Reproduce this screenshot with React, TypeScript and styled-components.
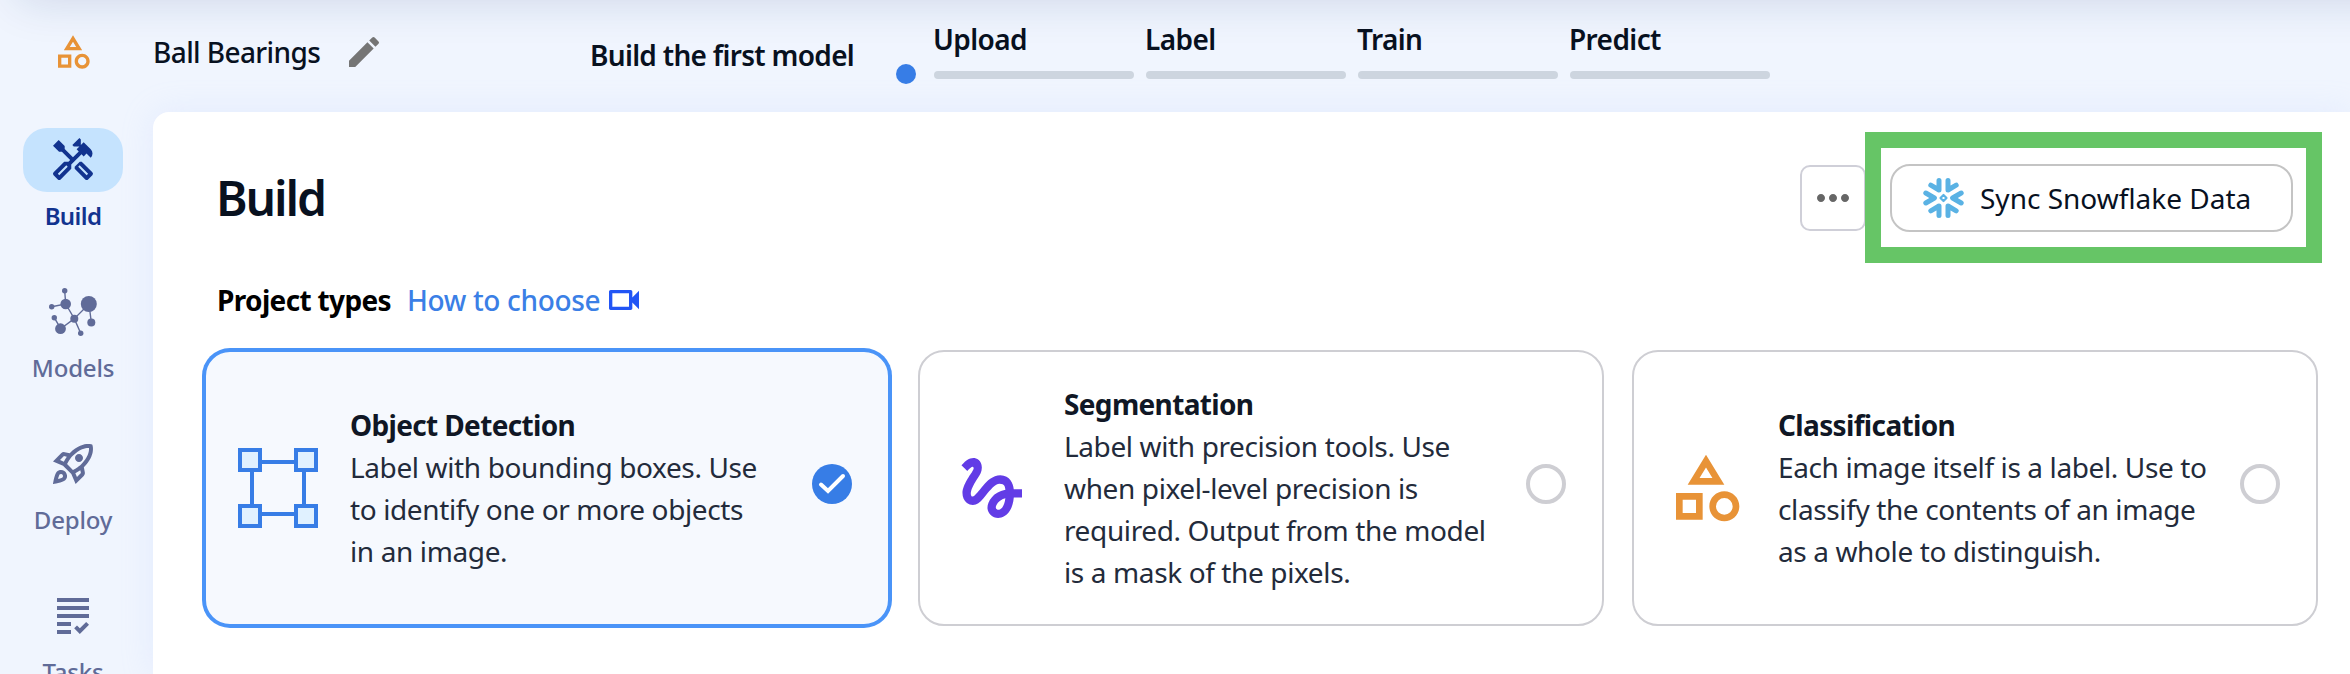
import React from "react";
import styled, { createGlobalStyle } from "styled-components";
import {
  MdEdit,
  MdGesture,
  MdGrading,
  MdMoreHoriz,
  MdOutlineCategory,
  MdOutlineHandyman,
  MdOutlineRocketLaunch,
  MdOutlineVideocam,
} from "react-icons/md";

const GlobalStyle = createGlobalStyle`
  * { box-sizing: border-box; }
  body { margin: 0; overflow: hidden; font-family: "Noto Sans", sans-serif; }
  svg { display: block; flex: none; }
`;

const Page = styled.div`
  position: relative;
  height: 674px;
  overflow: hidden;
  background: #f0f5fe;
  color: #08111f;
  display: grid;
  grid-template-columns: 153px 1fr;
  grid-template-rows: 112px 562px;

  /* Shade cast by the application bar above */
  &::before {
    content: "";
    position: absolute;
    top: -60px;
    left: 18px;
    right: -60px;
    height: 60px;
    box-shadow: 0 0 46px rgba(20, 50, 110, 0.16);
  }
`;

const ProjectMark = styled.div`
  padding: 32px 0 0 53px;
  color: #e89337;
`;

const Header = styled.header`
  display: flex;
  align-items: flex-start;
`;

const ProjectName = styled.div`
  width: 191px;
  padding-top: 35px;
  font-size: 28px;
  font-weight: 500;
  line-height: 34px;
  letter-spacing: -0.6px;
  white-space: nowrap;
`;

const EditButton = styled.div`
  padding-top: 32px;
  width: 246px;
  color: #757575;
`;

const Milestone = styled.div`
  width: 307px;
  padding-top: 38px;
  font-size: 28px;
  font-weight: 600;
  line-height: 34px;
  letter-spacing: -0.7px;
  white-space: nowrap;
`;

const ProgressDot = styled.div`
  width: 20px;
  height: 20px;
  margin: 64px 18px 0 -1px;
  border-radius: 50%;
  background: #377de6;
`;

const Steps = styled.div`
  display: flex;
  gap: 12px;
  padding-top: 22px;
`;

const Step = styled.div`
  width: 200px;
  display: flex;
  flex-direction: column;
  gap: 15px;
  font-size: 28px;
  font-weight: 600;
  line-height: 34px;
  letter-spacing: -0.6px;
`;

const StepLabel = styled.span`
  margin-left: -1px;
`;

const StepBar = styled.div`
  height: 8px;
  border-radius: 4px;
  background: #cdd5df;
`;

const Nav = styled.nav`
  display: flex;
  flex-direction: column;
  gap: 48px;
  padding: 16px 0 0 23px;
`;

const NavItem = styled.div<{ $active?: boolean }>`
  width: 100px;
  display: flex;
  flex-direction: column;
  align-items: center;
  gap: 8px;
  color: ${(p) => (p.$active ? "#12338f" : "#606b98")};
  font-size: 24px;
  font-weight: ${(p) => (p.$active ? 600 : 500)};
  letter-spacing: ${(p) => (p.$active ? "-0.6px" : "-0.2px")};
  line-height: 32px;
`;

const NavPill = styled.div<{ $active?: boolean }>`
  width: 100px;
  height: 64px;
  flex: none;
  display: flex;
  align-items: center;
  justify-content: center;
  border-radius: 24px;
  background: ${(p) => (p.$active ? "#c5e3fe" : "transparent")};
`;

const Panel = styled.main`
  background: #fff;
  border-top-left-radius: 16px;
  box-shadow: 0 0 32px rgba(180, 205, 254, 0.22);
  padding: 20px 28px 0 63px;
`;

const TitleRow = styled.div`
  height: 131px;
  display: flex;
  align-items: center;
`;

const Title = styled.h1`
  flex: 1;
  margin: 0;
  font-size: 48px;
  font-weight: 600;
  line-height: 66px;
  letter-spacing: -2.1px;
`;

const MoreButton = styled.div`
  width: 66px;
  height: 66px;
  margin-right: -1px;
  display: flex;
  align-items: center;
  justify-content: center;
  border: 2px solid #cfcfd8;
  border-radius: 10px;
  color: #666;
`;

const Highlight = styled.div`
  position: relative;
  width: 457px;
  height: 131px;
  border: 16px solid #66c566;
  padding: 16px 13px 0 9px;
  background: #fff;
`;

const SyncButton = styled.div`
  height: 68px;
  display: flex;
  align-items: center;
  gap: 16px;
  padding-left: 31px;
  border: 2px solid #c4c4c4;
  border-radius: 20px;
  font-size: 28px;
  font-weight: 400;
  white-space: nowrap;
`;

const TypesHeader = styled.div`
  display: flex;
  align-items: flex-start;
  margin-top: 17px;
  font-size: 28px;
  line-height: 40px;
  white-space: nowrap;
`;

const TypesTitle = styled.div`
  width: 190px;
  padding-left: 1px;
  color: #000;
  font-weight: 700;
  letter-spacing: -0.65px;
`;

const HelpLink = styled.div`
  width: 198px;
  padding-left: 1px;
  color: #3b7fe6;
  font-weight: 500;
  letter-spacing: -0.35px;
`;

const VideoIcon = styled(MdOutlineVideocam)`
  color: #2255f5;
`;

const Cards = styled.div`
  display: flex;
  gap: 28px;
  margin: 30px 0 0 -12px;
`;

const Card = styled.div<{ $selected?: boolean }>`
  width: 686px;
  flex: none;
  height: 276px;
  display: flex;
  align-items: center;
  padding: 0 36px 0 32px;
  border: 2px solid ${(p) => (p.$selected ? "#4a94f8" : "#ceced3")};
  border-radius: 26px;
  box-shadow: ${(p) => (p.$selected ? "0 0 0 2px #4a94f8" : "none")};
  background: ${(p) => (p.$selected ? "#f6f9fe" : "#fff")};
`;

const CardIcon = styled.div<{ $color: string }>`
  width: 80px;
  height: 80px;
  color: ${(p) => p.$color};
`;

const CardText = styled.div`
  flex: 1;
  margin: 0 0 1px 32px;
  font-size: 28px;
  line-height: 42px;
  letter-spacing: -0.38px;
  white-space: pre;
  color: #232b3b;
`;

const CardTitle = styled.div`
  font-weight: 700;
  letter-spacing: -0.65px;
  color: #101725;
`;

const Radio = styled.div<{ $checked?: boolean }>`
  width: 40px;
  height: 40px;
  margin-bottom: 8px;
  border-radius: 50%;
  border: ${(p) => (p.$checked ? "none" : "4px solid #ceced3")};
  background: ${(p) => (p.$checked ? "#377de6" : "#fff")};
`;

const ModelsIcon = () => (
  <svg width="48" height="48" viewBox="0 0 48 48" fill="currentColor">
    <path
      d="M15.7 2.7 16.7 16 2.7 18.7M16.7 16l8.6 14.7L40 16l2.3 18.3M5.3 29.7l6.4 11 13.6-10 6.4 14.6"
      fill="none"
      stroke="currentColor"
      strokeWidth="1.4"
    />
    <circle cx="15.7" cy="2.7" r="2.7" />
    <circle cx="2.7" cy="18.7" r="2.7" />
    <circle cx="16.7" cy="16" r="5.3" />
    <circle cx="39.8" cy="16" r="8" />
    <circle cx="5.3" cy="29.7" r="2.7" />
    <circle cx="11.5" cy="40.7" r="5.4" />
    <circle cx="25.3" cy="30.7" r="4" />
    <circle cx="42.3" cy="34.5" r="4" />
    <circle cx="31.7" cy="45.3" r="2.7" />
  </svg>
);

const BoxIcon = () => (
  <svg width="80" height="80" viewBox="0 0 80 80">
    <path d="M14 14h52v52H14z" fill="none" stroke="#377de6" strokeWidth="4" />
    {[2, 58].map((x) =>
      [2, 58].map((y) => (
        <rect key={`${x}-${y}`} x={x} y={y} width="20" height="20" fill="#e0f1ff" stroke="#377de6" strokeWidth="4" />
      ))
    )}
  </svg>
);

const SnowflakeIcon = () => (
  <svg width="41" height="40" viewBox="-0.5 0 41 40" fill="none" stroke="#5ab2e4" strokeWidth="5" strokeLinecap="round" strokeLinejoin="round">
    <path d="M15.5 2.5V12L7.3 7.2M24.5 2.5V12l8.2-4.8M15.5 37.5V28l-8.2 4.8M24.5 37.5V28l8.2 4.8M2.3 15l8.6 5-8.6 5M37.7 15l-8.6 5 8.6 5" />
    <path d="m20 17 3 3-3 3-3-3z" strokeWidth="2.2" />
  </svg>
);

const navItems = [
  { label: "Build", icon: <MdOutlineHandyman size={48} />, active: true },
  { label: "Models", icon: <ModelsIcon /> },
  { label: "Deploy", icon: <MdOutlineRocketLaunch size={48} /> },
  { label: "Tasks", icon: <MdGrading size={48} /> },
];

const steps = ["Upload", "Label", "Train", "Predict"];

const projectTypes = [
  {
    title: "Object Detection",
    text: "Label with bounding boxes. Use\nto identify one or more objects\nin an image.",
    icon: <BoxIcon />,
    color: "#377de6",
    selected: true,
  },
  {
    title: "Segmentation",
    text: "Label with precision tools. Use\nwhen pixel-level precision is\nrequired. Output from the model\nis a mask of the pixels.",
    icon: <MdGesture size={80} />,
    color: "#623ce6",
  },
  {
    title: "Classification",
    text: "Each image itself is a label. Use to\nclassify the contents of an image\nas a whole to distinguish.",
    icon: <MdOutlineCategory size={80} />,
    color: "#e89337",
  },
];

export default function App() {
  return (
    <>
      <GlobalStyle />
      <Page>
        <ProjectMark>
          <MdOutlineCategory size={40} />
        </ProjectMark>
        <Header>
          <ProjectName>Ball Bearings</ProjectName>
          <EditButton>
            <MdEdit size={40} />
          </EditButton>
          <Milestone>Build the first model</Milestone>
          <ProgressDot />
          <Steps>
            {steps.map((s) => (
              <Step key={s}>
                <StepLabel>{s}</StepLabel>
                <StepBar />
              </Step>
            ))}
          </Steps>
        </Header>
        <Nav>
          {navItems.map((n) => (
            <NavItem key={n.label} $active={n.active}>
              <NavPill $active={n.active}>{n.icon}</NavPill>
              {n.label}
            </NavItem>
          ))}
        </Nav>
        <Panel>
          <TitleRow>
            <Title>Build</Title>
            <MoreButton>
              <MdMoreHoriz size={48} />
            </MoreButton>
            <Highlight>
              <SyncButton>
                <SnowflakeIcon />
                Sync Snowflake Data
              </SyncButton>
            </Highlight>
          </TitleRow>
          <TypesHeader>
            <TypesTitle>Project types</TypesTitle>
            <HelpLink>How to choose</HelpLink>
            <VideoIcon size={40} />
          </TypesHeader>
          <Cards>
            {projectTypes.map((t) => (
              <Card key={t.title} $selected={t.selected}>
                <CardIcon $color={t.color}>{t.icon}</CardIcon>
                <CardText>
                  <CardTitle>{t.title}</CardTitle>
                  {t.text}
                </CardText>
                <Radio $checked={t.selected}>
                  {t.selected && (
                    <svg width="40" height="40" viewBox="0 0 40 40" fill="none">
                      <path d="m9 20.5 7 6.5 15-15" stroke="#fff" strokeWidth="4" strokeLinecap="round" />
                    </svg>
                  )}
                </Radio>
              </Card>
            ))}
          </Cards>
        </Panel>
      </Page>
    </>
  );
}
